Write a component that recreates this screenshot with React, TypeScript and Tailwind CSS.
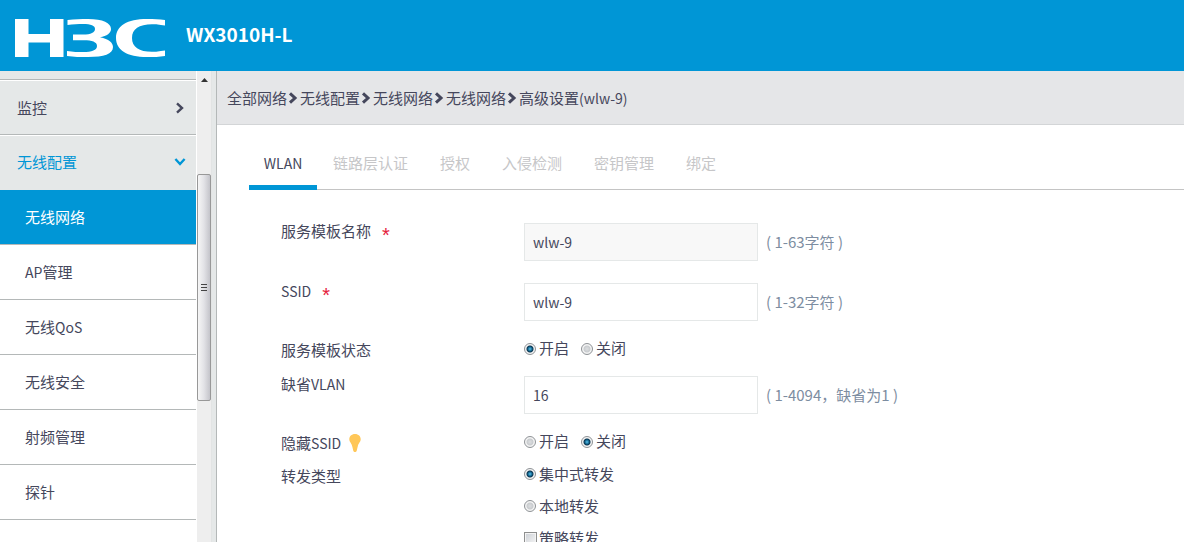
import { useState } from "react";
import type { ReactNode } from "react";

const subMenu = [
  "无线网络",
  "AP管理",
  "无线QoS",
  "无线安全",
  "射频管理",
  "探针",
];

const crumbs = ["全部网络", "无线配置", "无线网络", "无线网络"];

const tabs = ["WLAN", "链路层认证", "授权", "入侵检测", "密钥管理", "绑定"];

const radioClass =
  "size-3 shrink-0 appearance-none rounded-full border border-[#8e9296] bg-[radial-gradient(circle,#dcdee0_0,#c9cccf_3px,#f4f4f4_4px)] checked:bg-[radial-gradient(circle_at_center,#5cc4ee_0,#12668f_2px,#0b3550_3px,#f4f4f4_4px)]";

// Latin runs are set one step smaller than the Chinese text around them
function Mixed({ text }: { text: string }) {
  return (
    <>
      {text.split(/([\x21-\x7e]+)/).map((part, i) =>
        i % 2 === 1 ? (
          <span key={i} className="text-sm leading-4">
            {part}
          </span>
        ) : (
          part
        )
      )}
    </>
  );
}

function Chevron({ className }: { className: string }) {
  return (
    <svg
      viewBox="0 0 10 12"
      className={className}
      fill="none"
      stroke="currentColor"
      aria-hidden="true"
    >
      <path d="M2 1.4 L7 6 L2 10.6" />
    </svg>
  );
}

function Logo() {
  return (
    <svg
      viewBox="0 0 150 38"
      className="mt-1 h-[38px] w-[150px]"
      fill="white"
      role="img"
      aria-label="H3C"
    >
      <path d="M0 0H13.500V15H35V0H48.500V38H35V23.500H13.500V38H0Z" />
      <path d="M52.500 1C60 0 66 0 73 0C88 0 96 4 96 10C96 14 92 17 85 18.300C94 20 98 24 98 28C98 35 89 38 73 38C65 38 59 38 52 37V32C58 33 63 33 68 33C77 33 82 31 82 27C82 23 77 21.300 69 21.300H58V15.600H68C76 15.600 80 13.500 80 10C80 6.500 76 5 68 5C63 5 58 5 52.500 6Z" />
      <path d="M150 1V6.500C144 5.500 141 5.200 137 5.200C124 5.200 117 10 117 19C117 28 124 32.800 137 32.800C141 32.800 144 32.500 150 31.500V37C144 38 139 38 132 38C112 38 101 31 101 19C101 7 112 0 132 0C139 0 144 0 150 1Z" />
    </svg>
  );
}

function Bulb() {
  return (
    <svg viewBox="0 0 12 18" className="h-[18px] w-3" aria-hidden="true">
      <path
        fill="#ffc758"
        d="M6 0C2.500 0 0.300 2.300 0.300 5.300C0.300 8.300 3 9.500 3.200 12.500H8.800C9 9.500 11.700 8.300 11.700 5.300C11.700 2.300 9.500 0 6 0ZM3.300 12.500H8.700L7.800 16.500C7.400 17.500 6.800 18 6 18C5.200 18 4.600 17.500 4.200 16.500Z"
      />
    </svg>
  );
}

function Star() {
  return (
    <span className="ml-[11px] h-4 pt-1 font-['Liberation_Sans',sans-serif] text-xl leading-4 text-[#e5203c]">
      *
    </span>
  );
}

function InputRow({
  id,
  label,
  required,
  hint,
  value,
  onChange,
  disabled,
}: {
  id: string;
  label: string;
  required?: boolean;
  hint: string;
  value: string;
  onChange?: (value: string) => void;
  disabled?: boolean;
}) {
  return (
    <div className="flex py-[11px]">
      <label htmlFor={id} className="flex w-[243px] shrink-0 leading-[15px]">
        <span>
          <Mixed text={label} />
        </span>
        {required && <Star />}
      </label>
      <input
        id={id}
        type="text"
        value={value}
        disabled={disabled}
        onChange={(e) => onChange?.(e.target.value)}
        className="h-[38px] w-[234px] border border-[#e5e8e8] bg-white px-2 text-sm outline-none disabled:bg-[#f8f8f8]"
      />
      <span className="ml-2 self-center text-[#7d8da1]">{hint}</span>
    </div>
  );
}

function SwitchRow({
  name,
  label,
  icon,
  value,
  onChange,
}: {
  name: string;
  label: string;
  icon?: ReactNode;
  value: string;
  onChange: (value: string) => void;
}) {
  return (
    <fieldset className="flex h-[33px]">
      <legend className="float-left flex h-9 w-[243px] shrink-0 items-center gap-2 leading-4">
        <span>
          <Mixed text={label} />
        </span>
        {icon}
      </legend>
      <div className="flex items-center gap-3">
        {["开启", "关闭"].map((option) => (
          <label key={option} className="flex items-center gap-[3px]">
            <input
              type="radio"
              name={name}
              checked={value === option}
              onChange={() => onChange(option)}
              className={radioClass}
            />
            {option}
          </label>
        ))}
      </div>
    </fieldset>
  );
}

function Sidebar() {
  const [active, setActive] = useState("无线网络");

  return (
    <nav className="w-[196px] shrink-0 overflow-hidden bg-white leading-4">
      <div className="h-[9px] border-b border-[#b4b8b8] bg-[#e5e8e8]" />
      <a
        href="#monitor"
        className="flex h-[55px] items-center justify-between border-t border-b border-t-white border-b-[#b4b8b8] bg-[#e5e8e8] pr-[11px] pl-[17px]"
      >
        监控
        <Chevron className="h-3 w-2.5 stroke-[2.4]" />
      </a>
      <a
        href="#wireless"
        className="flex h-[55px] items-center justify-between border-t border-white bg-[#e5e8e8] pr-[11px] pb-[3px] pl-[17px] text-[#0096d6]"
      >
        无线配置
        <Chevron className="h-3 w-2.5 rotate-90 stroke-[2.4]" />
      </a>
      {subMenu.map((item) => (
        <a
          key={item}
          href={`#${item}`}
          onClick={() => setActive(item)}
          className={
            item === active
              ? "flex h-[55px] items-center border-b border-[#b4b8b8] bg-[#0096d6] pl-[25px] text-white"
              : "flex h-[55px] items-center border-b border-[#b4b8b8] bg-white pl-[25px]"
          }
        >
          <span>
            <Mixed text={item} />
          </span>
        </a>
      ))}
    </nav>
  );
}

function ScrollTrack() {
  return (
    <div className="flex shrink-0 border-r border-[#b4b8b8] bg-[#e5e8e8]">
      <div className="flex w-4 flex-col items-center border-x border-l-white border-r-[#e2e4e4] bg-[#eeeeee]">
        <div className="flex h-[103px] justify-center pt-[7px]">
          <svg viewBox="0 0 7 4" className="h-1 w-[7px]" aria-hidden="true">
            <path d="M3.5 0L7 4H0Z" fill="#333" />
          </svg>
        </div>
        <div className="flex h-[227px] w-3.5 flex-col items-center justify-center gap-0.5 rounded-xs border border-[#989898] bg-linear-to-r from-[#f6f6f6] via-[#e2e2e6] to-[#c4c4ca]">
          <div className="h-px w-1.5 bg-[#444]" />
          <div className="h-px w-1.5 bg-[#444]" />
          <div className="h-px w-1.5 bg-[#444]" />
        </div>
      </div>
      <div className="w-1" />
    </div>
  );
}

export default function App() {
  const [tab, setTab] = useState("WLAN");
  const [ssid, setSsid] = useState("wlw-9");
  const [vlan, setVlan] = useState("16");
  const [status, setStatus] = useState("开启");
  const [hidden, setHidden] = useState("关闭");
  const [forward, setForward] = useState("集中式转发");
  const [policy, setPolicy] = useState(false);

  return (
    <div
      lang="zh-CN"
      className="flex h-screen flex-col overflow-hidden bg-white font-['Noto_Sans_CJK_SC',sans-serif] text-[15px] text-[#45475c]"
    >
      <header className="flex h-[71px] shrink-0 items-center bg-[#0096d6] pl-[15px]">
        <Logo />
        <h1 className="mb-1 ml-[21px] text-[19px] leading-6 font-bold text-white">
          WX3010H-L
        </h1>
      </header>

      <div className="flex min-h-0 flex-1">
        <Sidebar />
        <ScrollTrack />

        <main className="min-w-0 flex-1 overflow-hidden">
          <nav className="flex h-[54px] items-center border-b border-[#d3d5d7] bg-[#e5e6e8] pl-2.5 leading-4">
            {crumbs.map((crumb, i) => (
              <div key={i} className="flex items-center">
                <a href="#crumb">{crumb}</a>
                <Chevron className="mr-0.5 ml-px h-3 w-2.5 stroke-3" />
              </div>
            ))}
            <span>
              <Mixed text="高级设置(wlw-9)" />
            </span>
          </nav>

          <div className="pl-8">
            <div className="flex h-[65px] border-b border-[#c4c4c4] pt-4">
              {tabs.map((name) => (
                <button
                  key={name}
                  type="button"
                  onClick={() => setTab(name)}
                  className={
                    name === tab
                      ? "-mb-px min-w-[68px] border-b-5 border-[#0096d6] text-center"
                      : "-mb-px border-b-5 border-transparent px-4 text-[#c6c6c8]"
                  }
                >
                  <Mixed text={name} />
                </button>
              ))}
            </div>

            <form className="pt-[22px] pl-8">
              <InputRow
                id="template"
                label="服务模板名称"
                required
                disabled
                value="wlw-9"
                hint="( 1-63字符 )"
              />
              <InputRow
                id="ssid"
                label="SSID"
                required
                value={ssid}
                onChange={setSsid}
                hint="( 1-32字符 )"
              />
              <SwitchRow
                name="status"
                label="服务模板状态"
                value={status}
                onChange={setStatus}
              />
              <InputRow
                id="vlan"
                label="缺省VLAN"
                value={vlan}
                onChange={setVlan}
                hint="( 1-4094，缺省为1 )"
              />
              <SwitchRow
                name="hidden"
                label="隐藏SSID"
                icon={<Bulb />}
                value={hidden}
                onChange={setHidden}
              />
              <fieldset className="flex">
                <legend className="float-left flex h-9 w-[243px] shrink-0 items-center leading-4">
                  转发类型
                </legend>
                <div className="flex flex-col">
                  {["集中式转发", "本地转发"].map((option) => (
                    <label
                      key={option}
                      className="flex h-8 items-center gap-[3px]"
                    >
                      <input
                        type="radio"
                        name="forward"
                        checked={forward === option}
                        onChange={() => setForward(option)}
                        className={radioClass}
                      />
                      {option}
                    </label>
                  ))}
                  <label className="flex h-8 items-center gap-0.5">
                    <input
                      type="checkbox"
                      checked={policy}
                      onChange={(e) => setPolicy(e.target.checked)}
                      className="size-[13px] shrink-0 appearance-none border border-[#8e8f8f] bg-linear-to-br from-[#cbcfd5] to-[#f6f6f6] shadow-[inset_0_0_0_1px_#f4f4f4] checked:bg-[#0096d6]"
                    />
                    策略转发
                  </label>
                </div>
              </fieldset>
            </form>
          </div>
        </main>
      </div>
    </div>
  );
}
